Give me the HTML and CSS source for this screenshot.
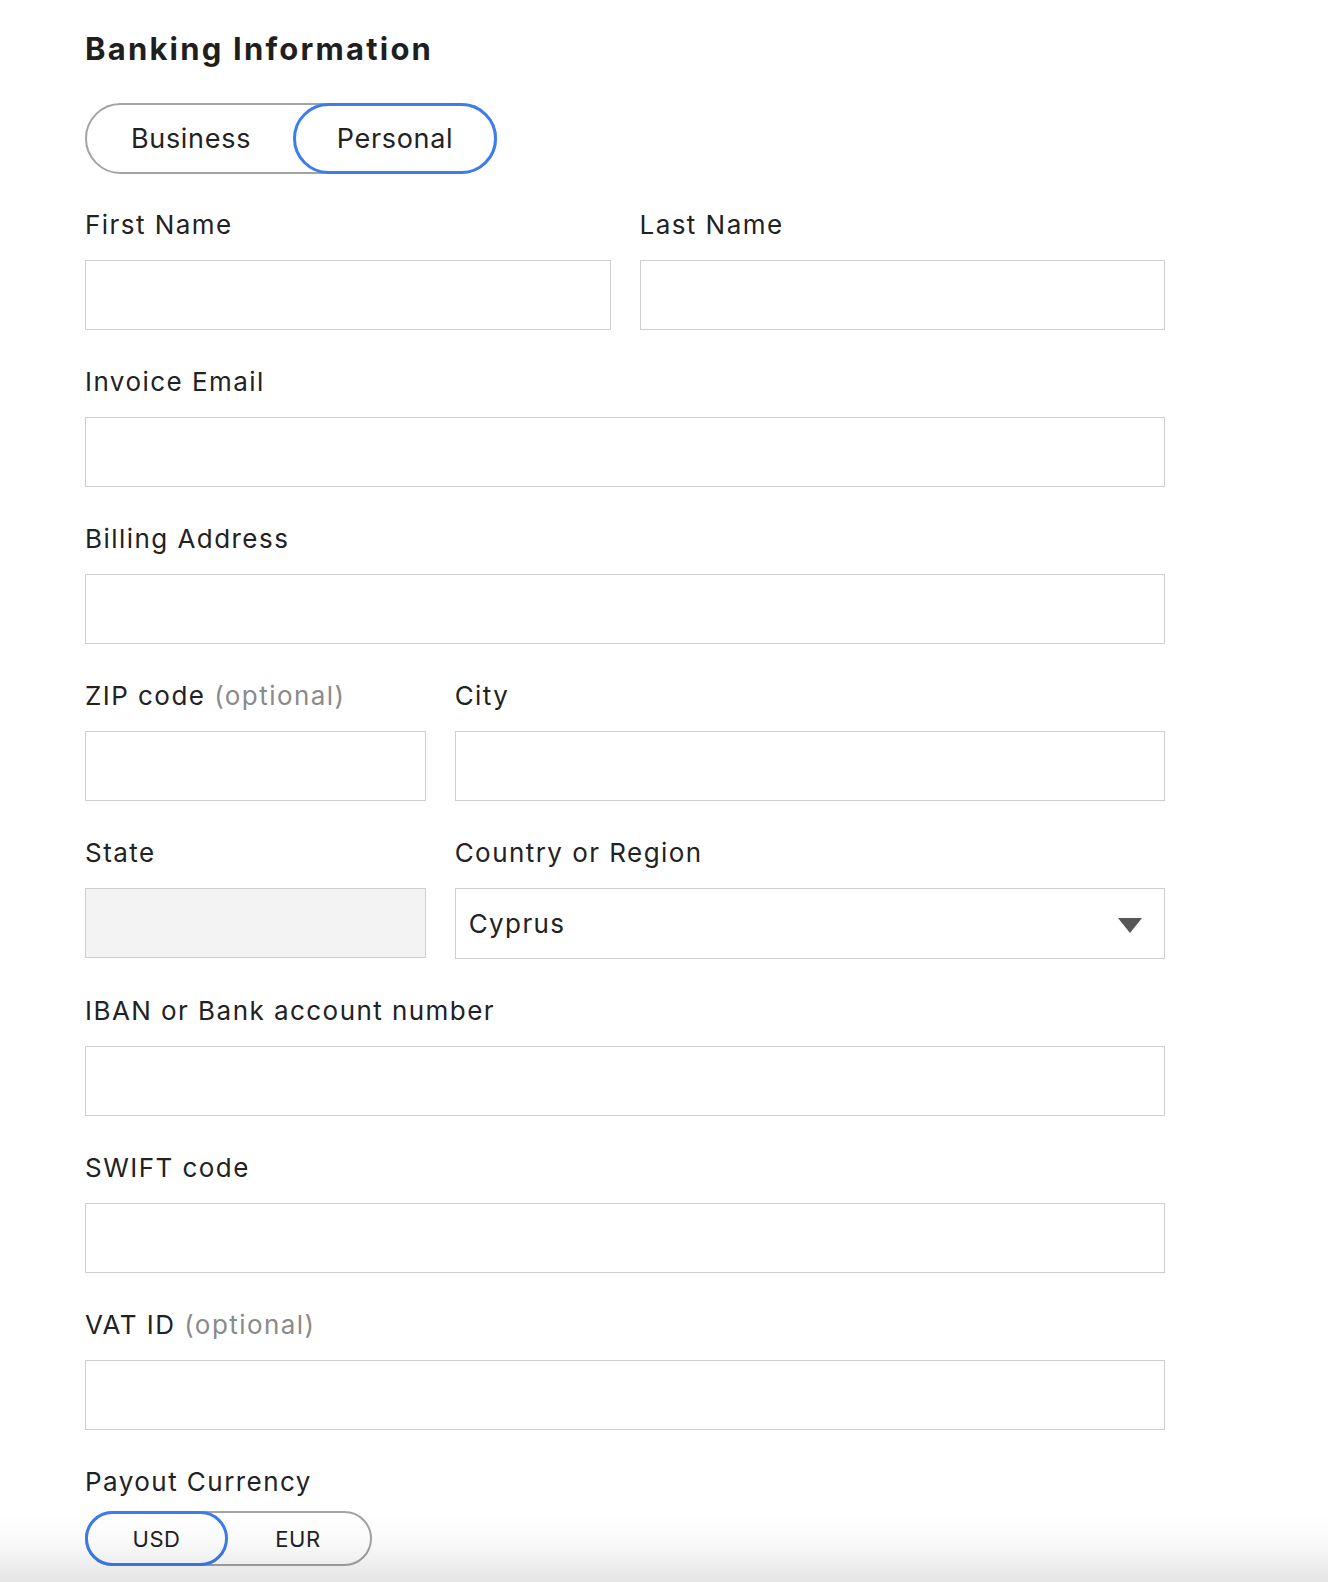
FILE: index.html
```html
<!DOCTYPE html>
<html lang="en">
<head>
<meta charset="utf-8">
<title>Banking Information</title>
<link rel="stylesheet" href="styles.css">
</head>
<body>
<main class="page">
  <h1 class="title">Banking Information</h1>
  <div class="seg seg-type">
    <button class="seg-btn" type="button">Business</button>
    <button class="seg-btn active" type="button">Personal</button>
  </div>
  <form class="form">
    <div class="row two">
      <div class="field"><label class="label">First Name</label><input class="input" type="text"></div>
      <div class="field"><label class="label">Last Name</label><input class="input" type="text"></div>
    </div>
    <div class="field"><label class="label">Invoice Email</label><input class="input" type="text"></div>
    <div class="field"><label class="label">Billing Address</label><input class="input" type="text"></div>
    <div class="row three">
      <div class="field"><label class="label">ZIP code <span class="opt">(optional)</span></label><input class="input" type="text"></div>
      <div class="field span2"><label class="label">City</label><input class="input" type="text"></div>
    </div>
    <div class="row three">
      <div class="field"><label class="label">State</label><input class="input disabled" type="text" disabled></div>
      <div class="field span2"><label class="label">Country or Region</label>
        <div class="select"><span class="select-value">Cyprus</span><span class="caret"></span></div>
      </div>
    </div>
    <div class="field"><label class="label">IBAN or Bank account number</label><input class="input" type="text"></div>
    <div class="field"><label class="label">SWIFT code</label><input class="input" type="text"></div>
    <div class="field"><label class="label">VAT ID <span class="opt">(optional)</span></label><input class="input" type="text"></div>
    <div class="field">
      <label class="label label-tight">Payout Currency</label>
      <div class="seg seg-cur">
        <button class="seg-btn active" type="button">USD</button>
        <button class="seg-btn" type="button">EUR</button>
      </div>
    </div>
  </form>
</main>
<div class="fade"></div>
</body>
</html>
```

FILE: styles.css
```css
* { box-sizing: border-box; }
html, body { margin: 0; padding: 0; background: #fff; }
body {
  font-family: Inter, "Noto Sans", "Liberation Sans", sans-serif;
  color: #222;
  overflow: hidden;
}
.page {
  width: 1080px;
  margin-left: 85px;
  padding-top: 29px;
}
.title {
  margin: 0;
  font-size: 31px;
  line-height: 40px;
  font-weight: 700;
  color: #1f1f1f;
  letter-spacing: 2.2px;
}
.seg {
  display: flex;
  border: 2px solid #a3a3a3;
  border-radius: 999px;
}
.seg-btn {
  margin: -2px;
  border: 3px solid transparent;
  border-radius: 999px;
  background: transparent;
  font-family: inherit;
  color: #222;
  padding: 0;
  cursor: pointer;
}
.seg-btn.active { border-color: #3b7cee; }
.seg-type {
  width: 412px;
  height: 71px;
  margin-top: 34px;
  margin-bottom: 33px;
}
.seg-type .seg-btn { font-size: 27px; letter-spacing: 0.7px; }
.seg-type .seg-btn:first-child { flex: 1; }
.seg-type .seg-btn:last-child { width: 204px; }
.seg-cur {
  width: 287px;
  height: 55px;
}
.seg-cur .seg-btn { font-size: 22px; letter-spacing: 0.6px; }
.seg-cur .seg-btn:first-child { width: 143px; }
.seg-cur .seg-btn:last-child { flex: 1; }
.form {
  display: flex;
  flex-direction: column;
  gap: 34px;
}
.row { display: grid; column-gap: 29px; }
.row.two { grid-template-columns: 1fr 1fr; }
.row.three { grid-template-columns: 1fr 1fr 1fr; }
.span2 { grid-column: span 2; }
.field { display: flex; flex-direction: column; }
.label {
  display: block;
  font-size: 26px;
  line-height: 36px;
  margin-bottom: 17px;
  color: #222;
  letter-spacing: 1.45px;
}
.label-tight { margin-bottom: 11px; }
.opt { color: #8a8a8a; }
.input {
  display: block;
  width: 100%;
  height: 70px;
  border: 1px solid #cfcfcf;
  border-radius: 0;
  background: #fff;
  font-family: inherit;
  font-size: 26px;
  padding: 0 15px;
  outline: none;
}
.input.disabled { background: #f3f3f3; }
.select {
  height: 71px;
  border: 1px solid #cfcfcf;
  display: flex;
  align-items: center;
  justify-content: space-between;
  padding: 0 22px 0 13px;
}
.select-value { font-size: 26px; line-height: 36px; color: #222; letter-spacing: 1.4px; }
.caret {
  width: 0;
  height: 0;
  border-left: 12.5px solid transparent;
  border-right: 12.5px solid transparent;
  border-top: 15px solid #575757;
  margin-top: 3px;
}
.fade {
  position: fixed;
  left: 0;
  right: 0;
  bottom: 0;
  height: 68px;
  background: linear-gradient(to bottom, rgba(0,0,0,0), rgba(0,0,0,0.02) 40%, rgba(0,0,0,0.1));
  pointer-events: none;
}
```
